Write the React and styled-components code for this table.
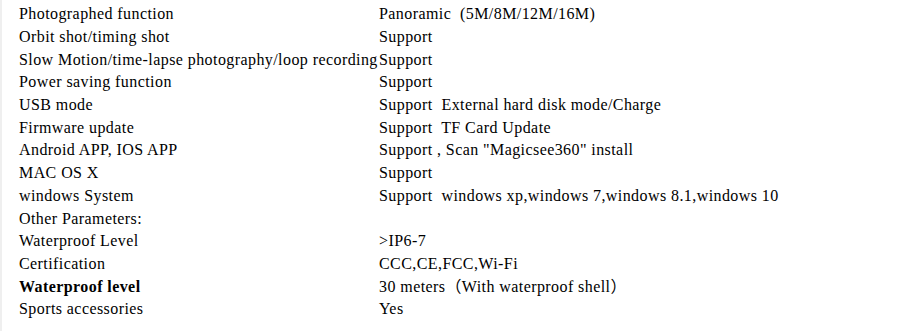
import React from 'react';
import styled, { createGlobalStyle } from 'styled-components';

const GlobalStyle = createGlobalStyle`
  html, body {
    margin: 0;
    padding: 0;
    background: #fff;
  }
`;

const specs = [
  ['Photographed function', 'Panoramic  (5M/8M/12M/16M)'],
  ['Orbit shot/timing shot', 'Support'],
  ['Slow Motion/time-lapse photography/loop recording', 'Support'],
  ['Power saving function', 'Support'],
  ['USB mode', 'Support  External hard disk mode/Charge'],
  ['Firmware update', 'Support  TF Card Update'],
  ['Android APP, IOS APP', 'Support , Scan "Magicsee360" install'],
  ['MAC OS X', 'Support'],
  ['windows System', 'Support  windows xp,windows 7,windows 8.1,windows 10'],
  ['Other Parameters:', ''],
  ['Waterproof Level', '>IP6-7'],
  ['Certification', 'CCC,CE,FCC,Wi-Fi'],
  ['Waterproof level', '30 meters（With waterproof shell）', true],
  ['Sports accessories', 'Yes'],
];

const SpecSheet = () => {
  return (
    <Page>
      <GlobalStyle />
      <SpecGrid>
        {specs.map(([label, value, bold]) => (
          <React.Fragment key={label + value}>
            <Cell $bold={bold}>{label}</Cell>
            <Cell>{value}</Cell>
          </React.Fragment>
        ))}
      </SpecGrid>
    </Page>
  );
};

const Page = styled.div`
  width: 920px;
  height: 331px;
  box-sizing: border-box;
  border-left: 2px solid #efefef;
  padding: 3px 0 0 17px;
  background: #fff;
  overflow: hidden;
`;

const SpecGrid = styled.div`
  display: grid;
  grid-template-columns: 360px 1fr;
  grid-auto-rows: 22.69px;
  align-items: center;
`;

const Cell = styled.div`
  font-family: 'Liberation Serif', 'Times New Roman', 'Noto Sans CJK SC', serif;
  font-size: 16px;
  line-height: 18px;
  letter-spacing: 0.42px;
  color: #000;
  white-space: pre;
  font-weight: ${(p) => (p.$bold ? 700 : 400)};
`;

export default SpecSheet;
